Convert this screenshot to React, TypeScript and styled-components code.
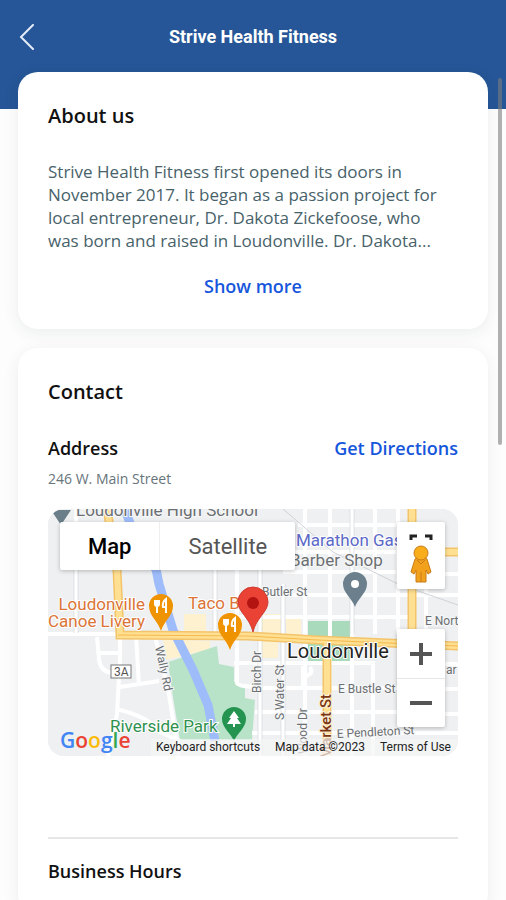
import React from "react";
import styled, { createGlobalStyle } from "styled-components";

const GlobalStyle = createGlobalStyle`
  * { box-sizing: border-box; }
  body { margin: 0; background: #fdfdfd; font-family: "Open Sans", sans-serif; color: #111; }
  button { border: 0; padding: 0; background: none; font: inherit; color: inherit; cursor: pointer; }
`;

const Screen = styled.div`
  position: relative;
  height: 100vh;
  overflow: hidden;
`;

const Header = styled.header`
  display: grid;
  grid-template-columns: 36px 1fr 36px;
  align-items: center;
  height: 109px;
  padding: 0 9px 36px;
  background: #265697;
  color: #fff;
`;

const BackButton = styled.button`
  display: grid;
  place-items: center;
  height: 36px;
`;

const Title = styled.h1`
  margin: 0;
  text-align: center;
  font: 700 18px/24px Roboto, sans-serif;
`;

const Cards = styled.main`
  display: flex;
  flex-direction: column;
  gap: 19px;
  margin-top: -37px;
  padding: 0 18px;
`;

const Card = styled.section`
  padding: 30px;
  border-radius: 20px;
  background: #fff;
  box-shadow: 0 4px 16px rgba(40, 50, 70, 0.08);
`;

const CardTitle = styled.h2`
  margin: 0;
  font-size: 20px;
  line-height: 28px;
  font-weight: 600;
`;

const Description = styled.p`
  margin: 30px 0 21px;
  font-size: 17px;
  line-height: 23px;
  font-weight: 500;
  color: #48626a;
`;

const CenterRow = styled.div`
  display: flex;
  justify-content: center;
`;

const TextButton = styled.button`
  font-size: 18px;
  line-height: 26px;
  font-weight: 600;
  color: #1656dc;
`;

const TextLink = styled.a`
  font-size: 18px;
  line-height: 26px;
  font-weight: 600;
  color: #1656dc;
  text-decoration: none;
`;

const AddressRow = styled.div`
  display: flex;
  justify-content: space-between;
  margin-top: 29px;
`;

const SubTitle = styled.h3`
  margin: 0;
  font-size: 18px;
  line-height: 26px;
  font-weight: 600;
`;

const Address = styled.p`
  margin: 8px 0 20px;
  font-size: 14px;
  line-height: 20px;
  color: #67757b;
`;

const MapFrame = styled.div`
  position: relative;
  height: 247px;
  overflow: hidden;
  border-radius: 16px;
  background: #eef0f2;
  font-family: Roboto, sans-serif;
`;

const MapCanvas = styled.svg`
  display: block;
  width: 100%;
  height: 100%;
  font-family: Roboto, sans-serif;
`;

const MapTypes = styled.div`
  position: absolute;
  top: 13px;
  left: 12px;
  display: flex;
  background: #fff;
  border-radius: 2px;
  box-shadow: 0 1px 4px rgba(0, 0, 0, 0.25);
`;

const MapType = styled.button<{ $active?: boolean }>`
  height: 48px;
  padding: 0 28px;
  font-size: 22px;
  font-weight: ${(p) => (p.$active ? 500 : 400)};
  color: ${(p) => (p.$active ? "#000" : "#555")};

  & + & { border-left: 1px solid #eee; }
`;

const MapControls = styled.div`
  position: absolute;
  top: 13px;
  right: 13px;
  bottom: 29px;
  width: 48px;
  display: flex;
  flex-direction: column;
  justify-content: space-between;
`;

const ControlGroup = styled.div`
  display: flex;
  flex-direction: column;
  background: #fff;
  border-radius: 2px;
  box-shadow: 0 1px 4px rgba(0, 0, 0, 0.25);
`;

const ZoomButton = styled.button`
  display: grid;
  place-items: center;
  height: 49px;

  & + & { box-shadow: inset 0 1px 0 #e6e6e6; }
`;

const PegmanButton = styled.button`
  display: grid;
  place-items: center;
  height: 67px;
`;

const MapFooter = styled.div`
  position: absolute;
  right: 0;
  bottom: 0;
  display: flex;
  gap: 15px;
  padding: 0 7px 0 5px;
  font-size: 12px;
  line-height: 17px;
  color: #222;
  background: rgba(245, 245, 245, 0.7);

  a, button { color: inherit; text-decoration: none; }
`;

const GoogleLogo = styled.div`
  position: absolute;
  left: 12px;
  bottom: 2px;
  font: 600 21px/28px "Open Sans", sans-serif;
`;

const Letter = styled.span<{ $color: string }>`
  color: ${(p) => p.$color};
`;

const Divider = styled.hr`
  height: 2px;
  margin: 81px 0 19px;
  border: 0;
  background: #e6e6e6;
`;

const ScrollThumb = styled.div`
  position: absolute;
  top: 78px;
  right: 4px;
  width: 4px;
  height: 367px;
  border-radius: 2px;
  background: rgba(125, 125, 125, 0.6);
`;

const FoodPin = ({ x, y }: { x: number; y: number }) => (
  <g transform={`translate(${x} ${y})`}>
    <path d="M0 25C-3 15-12 10-12 0A12 12 0 0 1 12 0C12 10 3 15 0 25Z" fill="#f09300" />
    <path d="M-6-6v4q0 2 2 2v7M-4-6v6M-2-6v4q0 2-2 2M5 7V-7Q1-4 2 1H5" fill="none" stroke="#fff" strokeWidth="2" />
  </g>
);

const LOGO: [string, string][] = [
  ["G", "#4285f4"], ["o", "#ea4335"], ["o", "#fbbc05"], ["g", "#4285f4"], ["l", "#34a853"], ["e", "#ea4335"],
];

const StreetMap = () => (
  <MapCanvas viewBox="0 0 410 247" preserveAspectRatio="xMidYMid slice" role="img" aria-label="Map of Loudonville">
    <rect width="410" height="247" fill="#eef0f2" />
    <path d="M136 105h22v19h-22zM213 105h22v22h-22zM238 110h15v17h-15zM214 132h16v17h-16zM115 130l47 2v8l-44 11z" fill="#fdf1cf" />
    <path d="M260 112h42v40h-42z" fill="#a8dabb" />
    <path d="M120 153L169 137L171 155L186 158V173L197 178V189L207 191L204 231H132L125 188Z" fill="#b8e3c8" />
    <g fill="none" stroke="#fff" strokeWidth="4">
      <path d="M28 0V125M0 125H72M49 128L51 150Q52 163 65 164M51 144H72M72 126V150L69 205L60 247M88 126L91 177M72 178L111 172M68 200Q100 207 112 223L132 232M107 127L120 180L131 247" />
      <path d="M167 61V125M189 61V174Q190 178 212 178M212 61V247M235 75V247M257 0V247M282 0V247M304 0V247M327 0V125M350 0V125" />
      <path d="M250 16H350M242 43H350M235 63H350M257 86H410M212 86H257M189 108H364M186 154H327M211 179H350M207 203H350M204 224H410M325 152V247M397 65H410M393 180H410M397 205H410M350 155H410M378 80V137M255 157V180M255 168q12-3 7-10" />
    </g>
    <g fill="none" stroke="#cfd2d6" strokeWidth="1">
      <path d="M235 0L285 43L350 75L410 96" />
      <path d="M26 60v64M30 60v64M165 61v63M169 61v63M210 61v185M214 61v185M233 75v172M237 75v172M302 0v125M306 0v125" opacity=".6" />
    </g>
    <path d="M77 0Q94 51 110 61" fill="none" stroke="#9ebcfa" strokeWidth="9" />
    <path d="M106 50L111 75L125 121L145 161L160 196L167 232" fill="none" stroke="#9ebcfa" strokeWidth="9" />
    <g fill="none" stroke="#f3c46a" strokeWidth="9">
      <path d="M59 0L69 61L72 126L200 127L270 131L410 137M364 0V135M279 134V247M364 43H410" />
    </g>
    <g fill="none" stroke="#ffdf91" strokeWidth="6">
      <path d="M59 0L69 61L72 126L200 127L270 131L410 137M364 0V135M279 134V247M364 43H410" />
    </g>
    <path d="M70 126L200 127L270 131L410 137" fill="none" stroke="#f5b94d" />
    <path d="M3 1H23L13 16Z" fill="#6b7f8a" />

    <g fill="#6b6f73" stroke="#f7f7f7" strokeWidth="2" paintOrder="stroke" fontSize="12">
      <text x="28" y="7" fontSize="17">Loudonville High School</text>
      <text x="214" y="87">Butler St</text>
      <text x="377" y="116">E North St</text>
      <text x="290" y="184">E Bustle St</text>
      <text x="289" y="229" transform="rotate(-3 289 229)">E Pendleton St</text>
      <text x="398" y="165">ar</text>
      <text transform="translate(213 184) rotate(-90)">Birch Dr</text>
      <text transform="translate(236 211) rotate(-90)">S Water St</text>
      <text transform="translate(259 245) rotate(-90)">Wood Dr</text>
      <text transform="translate(107 138) rotate(78)">Wally Rd</text>
      <text x="242" y="57" fontSize="17">Barber Shop</text>
    </g>
    <text transform="translate(283 250) rotate(-90)" fontSize="15" fontWeight="500" fill="#7c3514" stroke="#fff3d8" strokeWidth="2" paintOrder="stroke">Market St</text>
    <rect x="63" y="156" width="20" height="13" fill="#fff" stroke="#777" />
    <text x="66" y="167" fontSize="12" fill="#555">3A</text>
    <g fontSize="17" stroke="#fff" strokeWidth="2" paintOrder="stroke">
      <text x="248" y="37" fill="#5b68c8">Marathon Gas</text>
      <g fill="#db7436">
        <text x="97" y="101" textAnchor="end">Loudonville</text>
        <text x="97" y="118" textAnchor="end">Canoe Livery</text>
        <text x="140" y="100">Taco Bell</text>
      </g>
      <text x="62" y="223" fill="#2f9150">Riverside Park</text>
      <text x="239" y="149" fontSize="20" fill="#222">Loudonville</text>
    </g>
    <FoodPin x={113} y={97} />
    <FoodPin x={182} y={116} />
    <g transform="translate(205 94)">
      <path d="M0 29C-3 15-15 9-15-1A15 15 0 0 1 15-1C15 9 3 15 0 29Z" fill="#ea4335" stroke="#cf3a2f" />
      <circle r="6" fill="#b31412" />
    </g>
    <g transform="translate(307 75)">
      <path d="M0 23C-3 14-12 9-12 0A12 12 0 0 1 12 0C12 9 3 14 0 23Z" fill="#6b808c" />
      <circle r="4" fill="#fff" />
    </g>
    <g transform="translate(186 210)">
      <path d="M0 22C-3 14-12 9-12 0A12 12 0 0 1 12 0C12 9 3 14 0 22Z" fill="#249450" />
      <path d="M0-8L5-1H3L7 5H1V8H-1V5H-7L-3-1H-5Z" fill="#fff" />
    </g>
  </MapCanvas>
);

export default function App() {
  return (
    <>
      <GlobalStyle />
      <Screen>
        <Header>
          <BackButton aria-label="Back">
            <svg width="16" height="26" viewBox="0 0 16 26" fill="none" stroke="#e4ecf8" strokeWidth="2" strokeLinecap="round">
              <path d="M14 1L2 13L14 25" />
            </svg>
          </BackButton>
          <Title>Strive Health Fitness</Title>
        </Header>
        <Cards>
          <Card>
            <CardTitle>About us</CardTitle>
            <Description>
              Strive Health Fitness first opened its doors in
              <br />
              November 2017. It began as a passion project for
              <br />
              local entrepreneur, Dr. Dakota Zickefoose, who
              <br />
              was born and raised in Loudonville. Dr. Dakota...
            </Description>
            <CenterRow>
              <TextButton>Show more</TextButton>
            </CenterRow>
          </Card>
          <Card>
            <CardTitle>Contact</CardTitle>
            <AddressRow>
              <SubTitle>Address</SubTitle>
              <TextLink href="#directions">Get Directions</TextLink>
            </AddressRow>
            <Address>246 W. Main Street</Address>
            <MapFrame>
              <StreetMap />
              <MapTypes>
                <MapType $active>Map</MapType>
                <MapType>Satellite</MapType>
              </MapTypes>
              <MapControls>
                <ControlGroup>
                  <PegmanButton aria-label="Street View">
                    <svg width="30" height="56" viewBox="0 0 30 56">
                      <path d="M5 12V8H11M19 8H25V12" fill="none" stroke="#222" strokeWidth="3" />
                      <path d="M9 31Q15 27 21 31L25 44L22 46L20 42V54H10V42L8 46L5 44Z" fill="#f2a11c" stroke="#c77c19" />
                      <circle cx="15" cy="25" r="7" fill="#f9ad1b" stroke="#c77c19" />
                      <path d="M11 32L15 36L19 32M15 44V54" fill="none" stroke="#c77c19" />
                    </svg>
                  </PegmanButton>
                </ControlGroup>
                <ControlGroup>
                  <ZoomButton aria-label="Zoom in">
                    <svg width="22" height="22" viewBox="0 0 22 22" stroke="#555" strokeWidth="4">
                      <path d="M0 11H22M11 0V22" />
                    </svg>
                  </ZoomButton>
                  <ZoomButton aria-label="Zoom out">
                    <svg width="22" height="22" viewBox="0 0 22 22" stroke="#555" strokeWidth="4">
                      <path d="M0 11H22" />
                    </svg>
                  </ZoomButton>
                </ControlGroup>
              </MapControls>
              <GoogleLogo aria-label="Google">
                {LOGO.map(([letter, color], i) => (
                  <Letter key={i} $color={color}>{letter}</Letter>
                ))}
              </GoogleLogo>
              <MapFooter>
                <button>Keyboard shortcuts</button>
                <span>Map data ©2023</span>
                <a href="#terms">Terms of Use</a>
              </MapFooter>
            </MapFrame>
            <Divider />
            <SubTitle>Business Hours</SubTitle>
          </Card>
        </Cards>
        <ScrollThumb />
      </Screen>
    </>
  );
}
